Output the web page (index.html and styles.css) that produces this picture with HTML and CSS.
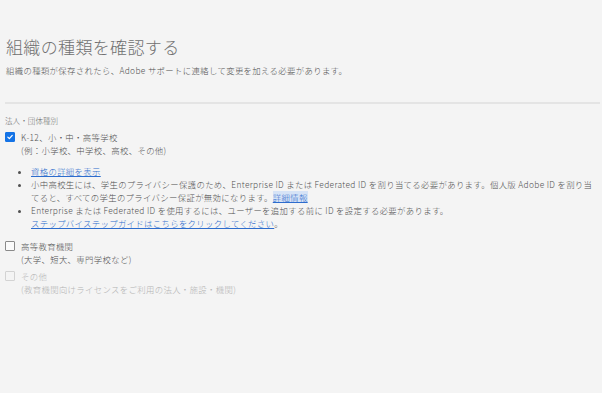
FILE: index.html
```html
<!DOCTYPE html>
<html lang="ja">
<head>
<meta charset="utf-8">
<link rel="stylesheet" href="styles.css">
</head>
<body>
<div class="page">
  <h1 class="title">組織の種類を確認する</h1>
  <p class="subtitle">組織の種類が保存されたら、Adobe サポートに連絡して変更を加える必要があります。</p>
  <div class="divider"></div>
  <div class="field-label">法人・団体種別</div>
  <div class="option">
    <span class="box checked"><svg viewBox="0 0 10 10" width="10" height="10"><path d="M2.3 5.2 L4.2 7 L7.8 3" fill="none" stroke="#fff" stroke-width="1.6" stroke-linecap="round" stroke-linejoin="round"/></svg></span>
    <div class="option-text">
      <div>K-12、小・中・高等学校</div>
      <div>(例：小学校、中学校、高校、その他)</div>
    </div>
  </div>
  <ul class="notes">
    <li><a href="#" class="link">資格の詳細を表示</a></li>
    <li>小中高校生には、学生のプライバシー保護のため、Enterprise ID または Federated ID を割り当てる必要があります。個人版 Adobe ID を割り当<br>てると、すべての学生のプライバシー保証が無効になります。<a href="#" class="link hl">詳細情報</a></li>
    <li>Enterprise または Federated ID を使用するには、ユーザーを追加する前に ID を設定する必要があります。<br><a href="#" class="link">ステップバイステップガイドはこちらをクリックしてください</a>。</li>
  </ul>
  <div class="option">
    <span class="box"></span>
    <div class="option-text">
      <div>高等教育機関</div>
      <div>(大学、短大、専門学校など)</div>
    </div>
  </div>
  <div class="option disabled">
    <span class="box"></span>
    <div class="option-text">
      <div>その他</div>
      <div>(教育機関向けライセンスをご利用の法人・施設・機関)</div>
    </div>
  </div>
</div>
</body>
</html>
```

FILE: styles.css
```css
html, body {
  margin: 0;
  padding: 0;
  background: #f4f4f4;
}
body {
  font-family: "Noto Sans CJK JP", "Noto Sans", sans-serif;
  font-weight: 300;
  color: #505050;
}
.page {
  padding: 34px 2px 0 5px;
}
.title {
  margin: 0 0 0 1px;
  font-size: 17px;
  font-weight: 300;
  letter-spacing: 0.35px;
  line-height: 26px;
  color: #707070;
}
.subtitle {
  margin: 4px 0 0 1px;
  font-size: 8.4px;
  letter-spacing: 0.35px;
  line-height: 13px;
}
.divider {
  margin-top: 25px;
  height: 2px;
  background: #e4e4e4;
}
.field-label {
  margin-top: 10px;
  font-size: 7.5px;
  letter-spacing: 0.1px;
  line-height: 13px;
  color: #707070;
}
.option {
  display: flex;
  align-items: flex-start;
  gap: 6px;
  margin-top: 4px;
  font-size: 8.4px;
  letter-spacing: 0.35px;
  line-height: 13px;
}
.box {
  flex: none;
  width: 8px;
  height: 8px;
  margin-top: 1px;
  border: 1px solid #8a8a8a;
  border-radius: 1px;
  background: #fafafa;
  display: flex;
  align-items: center;
  justify-content: center;
}
.box svg {
  display: block;
}
.box.checked {
  background: #1473e6;
  border-color: #1473e6;
}
.option-text {
  display: flex;
  flex-direction: column;
}
.option.disabled {
  color: #b3b3b3;
}
.option.disabled .box {
  border-color: #d3d3d3;
  background: #f4f4f4;
}
.notes {
  margin: 8px -2px 10px 0;
  padding-left: 26px;
  font-size: 8.4px;
  letter-spacing: 0.34px;
  line-height: 13px;
}
.link {
  color: #2d6ccd;
  text-decoration: underline;
}
.link.hl {
  background: #d6e3f6;
}
```
